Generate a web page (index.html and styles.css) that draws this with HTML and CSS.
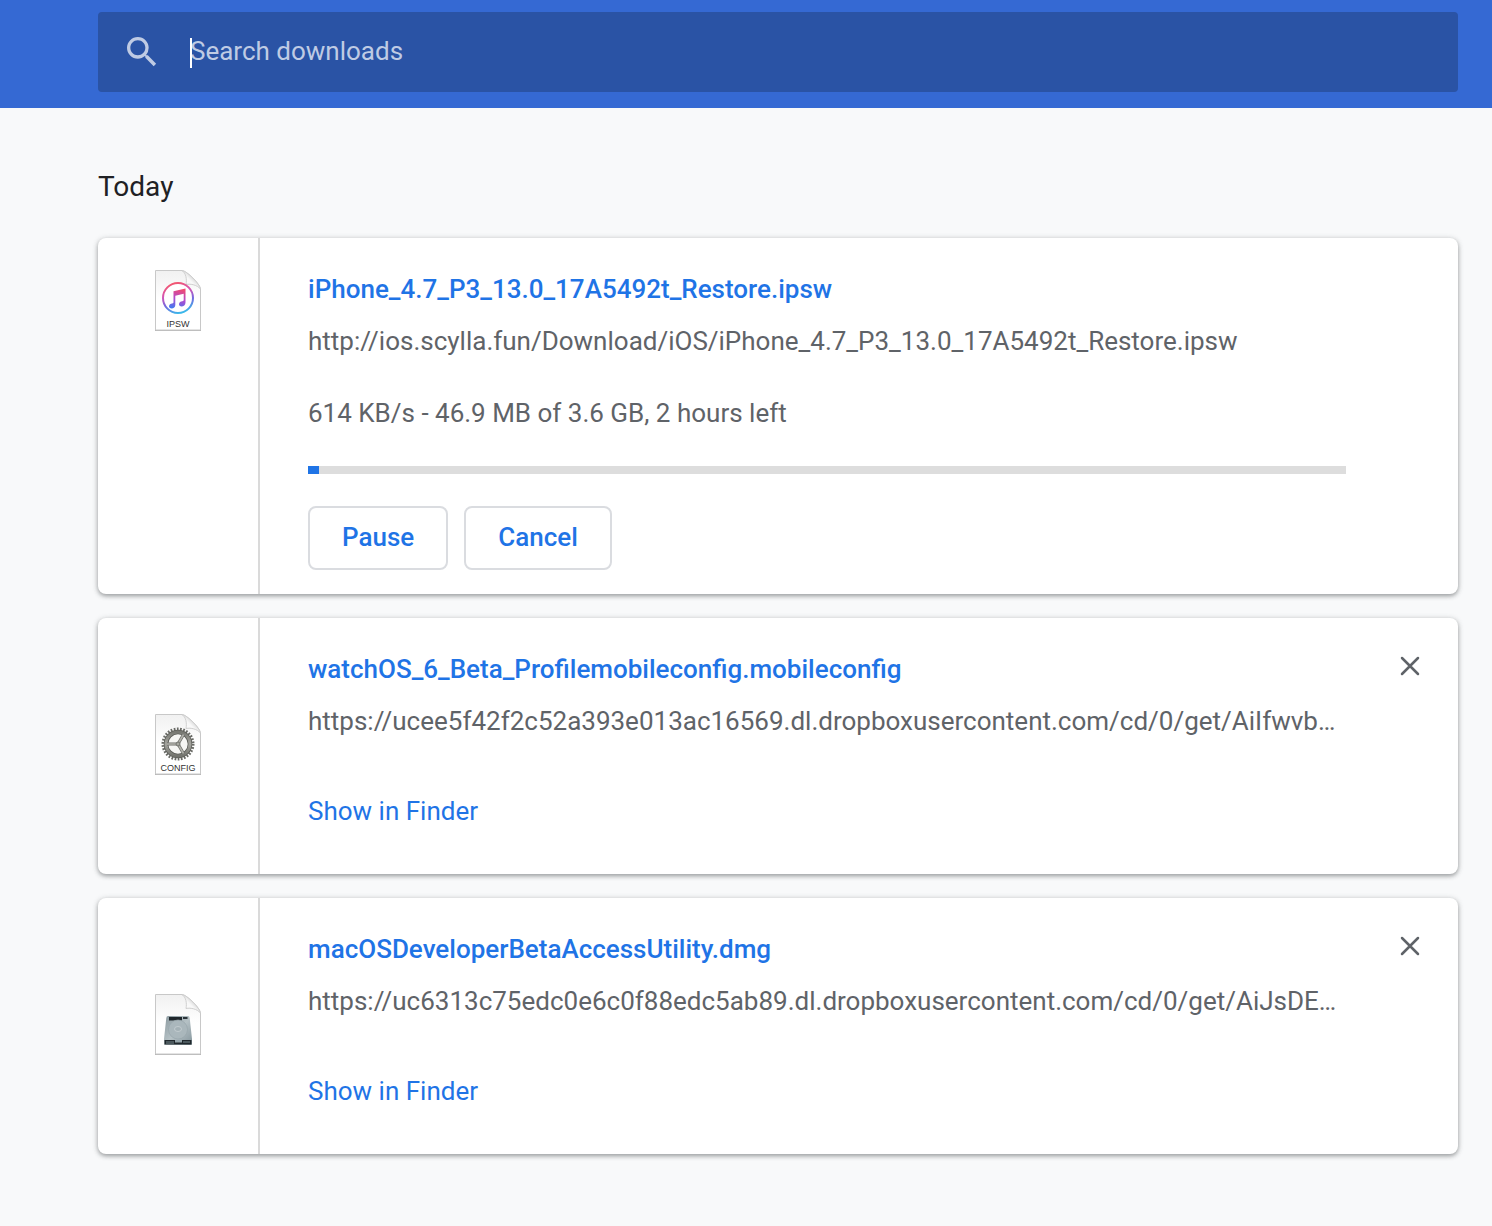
FILE: index.html
```html
<!DOCTYPE html>
<html lang="en">
<head>
<meta charset="utf-8">
<meta name="viewport" content="width=device-width, initial-scale=1">
<title>Downloads</title>
<link rel="stylesheet" href="styles.css">
</head>
<body>
<header class="toolbar">
  <form class="search" role="search">
    <svg class="search-icon" viewBox="0 0 24 24" aria-hidden="true"><path d="M15.5 14h-.79l-.28-.27A6.471 6.471 0 0 0 16 9.5 6.5 6.5 0 1 0 9.5 16c1.61 0 3.09-.59 4.23-1.57l.27.28v.79l5 4.99L20.49 19l-4.99-5zm-6 0C7.01 14 5 11.99 5 9.5S7.01 5 9.5 5 14 7.01 14 9.5 11.99 14 9.5 14z"/></svg>
    <div class="search-field">
      <input class="search-input" type="search" placeholder="Search downloads" aria-label="Search downloads">
      <span class="caret"></span>
    </div>
  </form>
</header>
<main class="downloads">
  <h1 class="date">Today</h1>

  <article class="card">
    <div class="file-icon file-icon-top">
      <svg class="file-svg" viewBox="0 0 64 64" aria-hidden="true">
        <defs>
          <linearGradient id="ring" x1="0.3" y1="0" x2="0.6" y2="1"><stop offset="0" stop-color="#f4566b"/><stop offset=".35" stop-color="#d455b5"/><stop offset=".65" stop-color="#7468df"/><stop offset="1" stop-color="#39b9ea"/></linearGradient>
          <linearGradient id="note" gradientUnits="userSpaceOnUse" x1="34" y1="21" x2="29" y2="41"><stop offset="0" stop-color="#f04a72"/><stop offset=".5" stop-color="#b04bd0"/><stop offset="1" stop-color="#3f7af0"/></linearGradient>
          <linearGradient id="fold" x1="0" y1="1" x2="1" y2="0"><stop offset="0" stop-color="#fff"/><stop offset=".45" stop-color="#f8f8f8"/><stop offset=".6" stop-color="#ddd"/></linearGradient>
          <linearGradient id="paper" x1="0" y1="0" x2="0" y2="1"><stop offset="0" stop-color="#f1f1f1"/><stop offset=".5" stop-color="#fff"/></linearGradient>
        </defs>
        <path class="page-shadow" d="M9 3H37L55 21V63H9Z"/>
        <path class="page" fill="url(#paper)" d="M9.500 2.500H36C41 3 54 16 54.500 21V62H9.500Z"/>
        <path class="fold" fill="url(#fold)" d="M36 2.500C40 5 41 11 40 16.500C45 15.500 51 17 54.500 21C54 16 41 3 36 2.500Z"/>
        <circle cx="32" cy="30" r="15" fill="#fff" stroke="url(#ring)" stroke-width="2"/>
        <path fill="url(#note)" d="M27.500 23.200 39.500 20.500V34.500C39.500 37 37.500 38.400 35.600 38.400 34 38.400 33 37.500 33 36.200 33 34.300 34.700 33.600 36.300 33.300 37.400 33.100 37.700 32.800 37.700 31.800V25.800L29.300 27.700V37C29.300 39.300 27.600 40.500 25.700 40.500 24.100 40.500 23 39.600 23 38.300 23 36.500 24.600 35.800 26.100 35.500 27.200 35.300 27.500 35 27.500 34Z"/>
        <text class="file-label" x="32" y="59" text-anchor="middle">IPSW</text>
      </svg>
    </div>
    <div class="content">
      <a class="name" href="#">iPhone_4.7_P3_13.0_17A5492t_Restore.ipsw</a>
      <p class="url">http://ios.scylla.fun/Download/iOS/iPhone_4.7_P3_13.0_17A5492t_Restore.ipsw</p>
      <p class="status">614 KB/s - 46.9 MB of 3.6 GB, 2 hours left</p>
      <div class="progress" role="progressbar" aria-label="Download progress" aria-valuenow="1" aria-valuemin="0" aria-valuemax="100"><div class="progress-fill" style="width:1.05%"></div></div>
      <div class="actions">
        <button class="button" type="button">Pause</button>
        <button class="button" type="button">Cancel</button>
      </div>
    </div>
    <div class="side"></div>
  </article>

  <article class="card">
    <div class="file-icon">
      <svg class="file-svg" viewBox="0 0 64 64" aria-hidden="true">
        <defs><linearGradient id="metal" x1="0" y1="0" x2="0" y2="1"><stop offset="0" stop-color="#777872"/><stop offset=".5" stop-color="#a4a49e"/><stop offset="1" stop-color="#73746e"/></linearGradient></defs>
        <path class="page-shadow" d="M9 3H37L55 21V63H9Z"/>
        <path class="page" fill="url(#paper)" d="M9.500 2.500H36C41 3 54 16 54.500 21V62H9.500Z"/>
        <path class="fold" fill="url(#fold)" d="M36 2.500C40 5 41 11 40 16.500C45 15.500 51 17 54.500 21C54 16 41 3 36 2.500Z"/>
        <circle cx="32" cy="32" r="15" fill="none" stroke="#6a6b66" stroke-width="3" stroke-dasharray="1.700 1.442"/>
        <circle cx="32" cy="32" r="12" fill="#f6f6f4" stroke="#5c5d58" stroke-width="4.600"/>
        <circle cx="32" cy="32" r="12" fill="none" stroke="url(#metal)" stroke-width="3"/>
        <path d="M32 32H21M32 32 37.500 22.500M32 32 37.500 41.500" stroke="#6a6b66" stroke-width="3"/>
        <path d="M32 32H21M32 32 37.500 22.500M32 32 37.500 41.500" stroke="#b2b2ac" stroke-width="1.600"/>
        <circle cx="32" cy="32" r="2" fill="#a6a7a0" stroke="#72736e"/>
        <text class="file-label" x="32" y="59" text-anchor="middle">CONFIG</text>
      </svg>
    </div>
    <div class="content">
      <a class="name" href="#">watchOS_6_Beta_Profilemobileconfig.mobileconfig</a>
      <p class="url">https://ucee5f42f2c52a393e013ac16569.dl.dropboxusercontent.com/cd/0/get/AiIfwvb…</p>
      <a class="show" href="#">Show in Finder</a>
    </div>
    <div class="side"><button class="remove" type="button" aria-label="Remove from list"><svg class="remove-icon" viewBox="0 0 20 20" aria-hidden="true"><path d="M2 2 18 18M18 2 2 18"/></svg></button></div>
  </article>

  <article class="card">
    <div class="file-icon">
      <svg class="file-svg" viewBox="0 0 64 64" aria-hidden="true">
        <defs><linearGradient id="drive" x1="0" y1="0" x2="1" y2="1"><stop offset="0" stop-color="#8b999f"/><stop offset=".5" stop-color="#b5c1c5"/><stop offset="1" stop-color="#84959c"/></linearGradient></defs>
        <path class="page-shadow" d="M9 3H37L55 21V63H9Z"/>
        <path class="page" fill="url(#paper)" d="M9.500 2.500H36C41 3 54 16 54.500 21V62H9.500Z"/>
        <path class="fold" fill="url(#fold)" d="M36 2.500C40 5 41 11 40 16.500C45 15.500 51 17 54.500 21C54 16 41 3 36 2.500Z"/>
        <path fill="url(#drive)" d="M22 24H42Q43.500 24 43.700 26L46 47V52Q46 53 45 53H19Q18 53 18 52V47L20.300 26Q20.500 24 22 24Z"/>
        <path fill="#20282d" d="M23 25H36V28.500H23ZM18.500 48H45.500V52.500H18.500Z"/>
        <path fill="#2b3439" d="M37 25H41.500V27H37Z"/>
        <circle cx="32" cy="37.500" r="9.500" fill="#aab7bc" stroke="#98a6ac" stroke-width=".7"/>
        <ellipse cx="32" cy="37" rx="3.500" ry="2.500" fill="#a4b1b6" stroke="#c8d1d4" stroke-width=".8"/>
        <path fill="#4b585d" d="M20 49H28V52H20ZM37 49H44V51H37Z"/>
        <path fill="#94a4aa" d="M29 48H36V50.500H29Z"/>
      </svg>
    </div>
    <div class="content">
      <a class="name" href="#">macOSDeveloperBetaAccessUtility.dmg</a>
      <p class="url">https://uc6313c75edc0e6c0f88edc5ab89.dl.dropboxusercontent.com/cd/0/get/AiJsDE…</p>
      <a class="show" href="#">Show in Finder</a>
    </div>
    <div class="side"><button class="remove" type="button" aria-label="Remove from list"><svg class="remove-icon" viewBox="0 0 20 20" aria-hidden="true"><path d="M2 2 18 18M18 2 2 18"/></svg></button></div>
  </article>
</main>
</body>
</html>
```
FILE: styles.css
```css
* { box-sizing: border-box; }

body {
  margin: 0;
  background: #f8f9fa;
  color: #202124;
  font: 26px/30px Roboto, "Liberation Sans", sans-serif;
}

.toolbar {
  padding: 12px 34px 16px 98px;
  background: #3569d3;
}

.search {
  display: flex;
  align-items: center;
  height: 80px;
  padding: 0 24px;
  border-radius: 4px;
  background: #2a53a5;
}

.search-icon {
  flex: none;
  width: 40px;
  height: 40px;
  margin-right: 28px;
  fill: #bfcbe4;
}

.search-field {
  position: relative;
  flex: 1;
  padding-bottom: 2px;
}

.search-input {
  display: block;
  width: 100%;
  padding: 0;
  border: 0;
  outline: 0;
  background: none;
  color: #fff;
  font: inherit;
}

.search-input::placeholder {
  color: #bfcbe4;
  opacity: 1;
}

.caret {
  position: absolute;
  bottom: 0;
  left: 0;
  width: 2px;
  height: 30px;
  background: #fff;
}

.downloads {
  padding: 64px 34px 72px 98px;
}

.date {
  margin: 0 0 36px;
  font-size: 28px;
  font-weight: 400;
}

.card {
  display: flex;
  margin-bottom: 24px;
  border-radius: 8px;
  background: #fff;
  box-shadow: 0 2px 4px rgba(60, 64, 67, .4), 0 1px 6px rgba(60, 64, 67, .2);
}

.file-icon {
  display: flex;
  flex: none;
  align-items: center;
  justify-content: center;
  width: 162px;
  padding-bottom: 4px;
  border-right: 2px solid #dadada;
}

.file-icon-top {
  align-items: flex-start;
  padding-top: 30px;
}

.file-svg {
  width: 64px;
  height: 64px;
}

.page { stroke: #c8c8c8; stroke-width: 1; }
.page-shadow { fill: #b4b4b4; }
.fold { stroke: #cfcfcf; stroke-width: 1; }

.file-label {
  fill: #333;
  font: 9px "Liberation Sans", sans-serif;
}

.content {
  display: flex;
  flex: 1;
  flex-direction: column;
  align-items: flex-start;
  min-width: 0;
  padding: 36px 0 24px 48px;
}

.name {
  color: #1f74e6;
  font-weight: 500;
  text-decoration: none;
}

.url {
  width: 100%;
  margin: 22px 0 0;
  overflow: hidden;
  color: #5f6368;
  text-overflow: ellipsis;
  white-space: nowrap;
}

.status {
  margin: 42px 0 38px;
  color: #5f6368;
}

.progress {
  width: 100%;
  height: 8px;
  background: #ddd;
}

.progress-fill {
  height: 100%;
  background: #1f74e6;
}

.actions {
  display: flex;
  gap: 16px;
  margin-top: 32px;
}

.button {
  height: 64px;
  padding: 0 32px 2px;
  border: 2px solid #dadce0;
  border-radius: 8px;
  background: #fff;
  color: #1f74e6;
  font: inherit;
  font-weight: 500;
}

.show {
  margin: 60px 0 24px;
  color: #1f74e6;
  text-decoration: none;
}

.side {
  flex: none;
  width: 112px;
  padding: 24px 24px 0 40px;
}

.remove {
  display: grid;
  place-items: center;
  width: 48px;
  height: 48px;
  padding: 0;
  border: 0;
  background: none;
}

.remove-icon {
  width: 20px;
  height: 20px;
  fill: none;
  stroke: #5f6368;
  stroke-width: 2.5;
  stroke-linecap: round;
}
```
